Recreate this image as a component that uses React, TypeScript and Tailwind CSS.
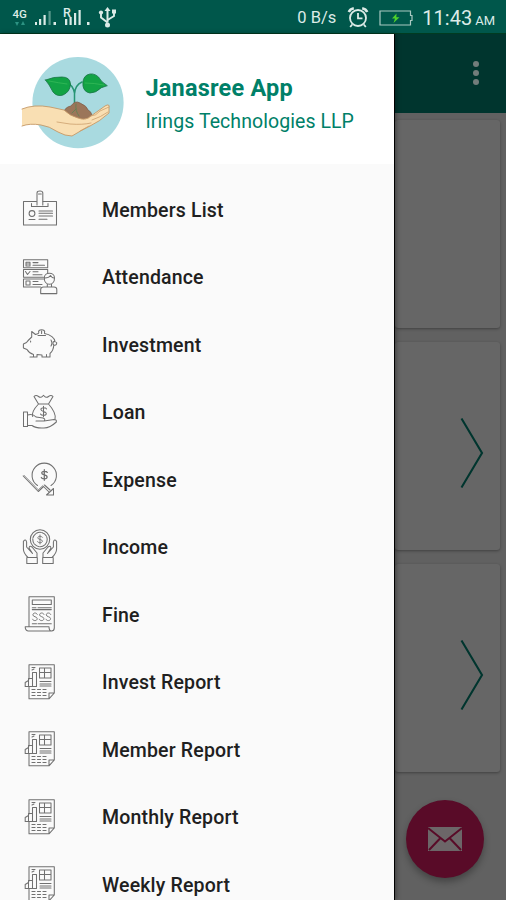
import type { ReactNode } from "react";

function Icon({ children }: { children: ReactNode }) {
  return (
    <svg viewBox="0 0 36 36" className="h-9 w-9 shrink-0 overflow-visible" fill="none" stroke="#707070" strokeWidth="1.05" strokeLinejoin="round" strokeLinecap="round">
      {children}
    </svg>
  );
}

const dollar = "M3 -2.6C2.4 -4 -2.6 -4.4 -2.6 -1.9C-2.6 0.4 2.8 -0.6 2.8 2C2.8 4.5 -2.4 4.2 -3 2.5M0 -5.3V5.3";
const ess = "M2.6 -2.8C2 -5 -2.4 -5 -2.4 -2.1C-2.4 0.2 2.5 -0.4 2.5 2.1C2.5 5 -2.2 5 -2.8 2.8";

const members = (
  <Icon>
    <path d="M14.5 10.5H1.5V34H34.5V10.5H21" />
    <path d="M15 14V2Q15 0 18 0Q20.8 0 20.8 2V14M16.5 3H19.3M9.5 12.5V15.5H26V12.5" />
    <circle cx="10" cy="22.5" r="2.9" />
    <path d="M7 28.5H13M17 20H30.5M17 22.3H30.5M17 25H30.5M17 28.3H25" />
  </Icon>
);

const attendance = (
  <Icon>
    <path d="M1.5 0.7H25.7V8.7H1.5ZM25.7 10.5H1.5V18.2H21.5M25.7 10.5V14M21.5 20H1.5V28H18.5" />
    <path d="M4 3.2H8V7H4ZM4 5H8M11 3.6H16M11 6.3H22.5M3.5 12.5L5.5 15.5L8 12.5M11 12.8H16M11 15.7H20M4 22H8V26H4ZM11 22.5H16M11 25.4H20" />
    <path d="M22.3 19C22.3 12.7 32.5 12.7 32.5 19C32.5 22.5 30.5 25.3 27.4 25.3C24.3 25.3 22.3 22.5 22.3 19ZM22.8 19Q27 19 28.5 16.5Q30 19 32 19M18.7 34.6V30.5Q18.7 28 21.5 28H32Q34.8 28 34.8 30.5V34.6ZM25.3 25.2V28M29.5 25.2V28" />
  </Icon>
);

const piggy = (
  <Icon>
    <path d="M16.4 7.5L13.5 8.5L9.7 5.5V11Q6 14.5 4.5 16.5L1.4 18V22L5 23.5Q7.5 27.5 11.5 28.5V31H8M11.5 31H15V28.5L20 29V31H24.5V28.5M24.5 31H28V27.5Q31.5 24.5 31.8 19C34 20 35 18 34.6 16.4M31.8 19C30 17.5 31.5 14 33.2 16C33.2 12 28 8.4 22.5 7.5" />
    <path d="M16.8 6.8C15 2.7 24.2 2.7 22.5 6.8M16 9.5H23.5M19.6 5V7.5M8.6 15V16M29 14Q31 17 29 20" />
  </Icon>
);

const loan = (
  <Icon>
    <path d="M16.5 10L12 2.5Q14 .5 16.5 2.5Q19 4.5 21.5 1.3Q24 4.5 26.5 2.5Q29 .5 31 2.5L26.5 10ZM16.5 10Q9 18 10.7 22.5M26.5 10Q34.5 19 33 25" />
    <path transform="translate(21.5 17.5)" d={dollar} />
    <path d="M1.5 18H5.5V32.5H1.5ZM5.5 21Q11 19.5 14 23L21 24Q24 25 22 27H14M22 27L32 25.5Q35 25.5 34.3 28Q28 34 22 34Q14 34.5 10 31.5H5.5" />
  </Icon>
);

const expense = (
  <Icon>
    <path d="M15.5 24.5A12.2 12.2 0 1 1 29 24.5M1.2 15L16.3 30.5L21.5 25.5L27 31M24.5 34H31.5V27.5ZM22.5 24L28 29" />
    <path strokeWidth="0.8" d="M2 14.3L16.3 28.8L21 24.5" />
    <path strokeWidth="1.25" transform="translate(22.3 14)" d={dollar} />
  </Icon>
);

const income = (
  <Icon>
    <circle cx="18" cy="10.5" r="9.7" />
    <circle cx="18" cy="10.5" r="7.2" strokeDasharray="5 1" />
    <path transform="translate(18 10.5) scale(.85)" d={dollar} />
    <path d="M4.8 28.5H15.3V34.5H4.8ZM6 28.5Q1.4 24 1.4 20V12.3Q3.8 9.5 4.6 13V18L10.5 24.5L7 19Q7.5 16 10 18L15 24V28.5" />
    <path d="M31.2 28.5H20.7V34.5H31.2ZM30 28.5Q34.6 24 34.6 20V12.3Q32.2 9.5 31.4 13V18L25.5 24.5L29 19Q28.5 16 26 18L21 24V28.5" />
  </Icon>
);

const fine = (
  <Icon>
    <path d="M7 30.8V.8H32.3V32Q32.3 35 29.5 35H6Q3.2 34.5 3.2 30.8H27Q27 34.8 29.5 35M10.3 4H29.3V8.5H10.3ZM10.3 11.7H14M16 11.7H29.3M10.3 13.6H29.3M10.3 27.8H14.5M16 27.8H29.3" />
    <path transform="translate(13 20.8) scale(.88)" d={ess} />
    <path transform="translate(19.7 20.8) scale(.88)" d={ess} />
    <path transform="translate(26.4 20.8) scale(.88)" d={ess} />
  </Icon>
);

const report = (
  <Icon>
    <path d="M7 15V.8H32.3V29L27 34.8H7V23M27 34.8V29H32.3" />
    <path d="M3.2 22.5V18.5L6.5 16.5V14.5H10.5V8.5H14.5V22.5ZM6.5 16.5V22.5M10.5 14.5V22.5M17.5 4H29V14H17.5ZM22.5 4V14M17.5 8.5H29M18 17.5H29M18 20H29M18 22H29M10 3.5H13M10 6L12 5" />
    <path strokeWidth="1.2" strokeDasharray="3 2.5" d="M10 25.5H25M10 28.5H25M10 31.5H24" />
  </Icon>
);

const items: { label: string; icon: ReactNode }[] = [
  { label: "Members List", icon: members },
  { label: "Attendance", icon: attendance },
  { label: "Investment", icon: piggy },
  { label: "Loan", icon: loan },
  { label: "Expense", icon: expense },
  { label: "Income", icon: income },
  { label: "Fine", icon: fine },
  { label: "Invest Report", icon: report },
  { label: "Member Report", icon: report },
  { label: "Monthly Report", icon: report },
  { label: "Weekly Report", icon: report },
];

function StatusBar() {
  return (
    <div className="flex h-[34px] shrink-0 items-center border-b border-[#003b20] bg-[#00574b] text-[#dcebe7]">
      <svg viewBox="0 0 120 34" className="h-[34px] w-[120px]" fill="#dcebe7">
        <text x="12.5" y="18" fontSize="11.5" fontWeight="500">4G</text>
        <path fill="#2c9383" d="M15 22h4l-2 4zM21 25h4l-2-4z" />
        <path d="M35 22h2v3h-2zM39 19h2.2v6H39zM43.5 15h2.2v10h-2.2zM53.5 22h2.5v3h-2.5zM65 19h2.3v6H65zM69.5 17h2.2v8h-2.2zM74 13h2.2v12H74zM78.5 10h2.2v15h-2.2zM87 22h2.5v3H87z" />
        <path fill="#58988c" d="M48.5 11h2.2v14h-2.2z" />
        <text x="63" y="17" fontSize="12.5" fontWeight="500">R</text>
        <path d="M107.5 7l3 4h-2v11.5h-2V11h-2z" />
        <path fill="none" stroke="#dcebe7" strokeWidth="1.9" d="M107.5 22.5L101 17.5V13M107.5 20L114 16V11.5" />
        <circle cx="101" cy="12.5" r="2.1" />
        <path d="M112 9.5h4v4h-4z" />
        <circle cx="107.5" cy="25" r="2.5" />
      </svg>
      <span className="ml-auto whitespace-nowrap pt-[4px] text-[16.5px]">0 B/s</span>
      <svg viewBox="0 0 22 22" className="ml-[11px] h-[22px] w-[22px]" fill="none" stroke="#dcebe7" strokeWidth="1.8">
        <circle cx="11" cy="12" r="8" />
        <path d="M11 7v5.3h4.5M5.2 18.5l-2 2.5M16.8 18.5l2 2.5" />
        <path strokeWidth="2.6" d="M1.8 6Q3 3 6.8 2.2M20.2 6Q19 3 15.2 2.2" />
      </svg>
      <svg viewBox="0 0 34 16" className="ml-2.5 mt-0.5 h-4 w-[34px]">
        <path fill="none" stroke="#a9c9c2" strokeWidth="1.2" d="M1 1h30.5v4.5H33v5h-1.5V15H1z" />
        <path fill="#4fd22b" d="M17.5 3.5L13 8.5h3L14.5 13l6-5.8h-3.2z" />
      </svg>
      <div className="ml-[9px] mr-[11px] flex items-baseline gap-[3px] whitespace-nowrap pt-[3px]">
        <span className="text-[20px] leading-6">11:43</span>
        <span className="text-[13px] leading-4">AM</span>
      </div>
    </div>
  );
}

function Logo() {
  return (
    <svg viewBox="0 0 140 130" className="h-[130px] w-[140px] shrink-0" strokeLinejoin="round" strokeLinecap="round">
      <circle cx="78" cy="68.7" r="45.6" fill="#a9dae0" />
      <path fill="none" stroke="#279574" strokeWidth="1.5" d="M74.5 69V59Q73 51 66 48M74.5 60Q75 51 82 48" />
      <path fill="#12a345" stroke="#177344" strokeWidth=".8" d="M45.5 46Q54 42.5 62 43Q70 43 70.5 50Q70 58 63 61Q57 63 53 58Q49 50 45.5 46Z" />
      <path fill="#12a345" stroke="#177344" strokeWidth=".8" d="M107 51.5Q101 48 98.5 43Q93 38 87 41Q82 44 83 52Q84 58 90 59Q96 59 101 54Z" />
      <path fill="none" stroke="#3bbd5c" strokeWidth=".7" d="M49 47Q59 49 67 50M104 51Q94 49 85 49" />
      <path fill="#9b765a" stroke="#80604b" strokeWidth=".8" d="M64 78Q65 73 71 72Q75 66 80 69Q87 72 88 76Q94 79 90 86L78 86Q67 84 64 78Z" />
      <path fill="none" stroke="#698054" strokeWidth="1" d="M76 70Q75 77 79 82M76 75L72 79" />
      <path fill="#f9dfb3" d="M22 75Q34 70 50 73L64 76Q70 82 78 84Q86 87 91 82L105 72Q110 69 109 74L109 79Q99 88 90 92Q80 97 72 102Q65 102 58 98Q49 92 41 91Q30 89 22 92Z" />
      <path fill="none" stroke="#c59867" strokeWidth=".9" d="M22 75Q34 70 50 73L64 76Q70 82 78 84Q86 87 91 82L105 72Q110 69 109 74L109 79Q99 88 90 92Q80 97 72 102Q65 102 58 98Q49 92 41 91Q30 89 22 92" />
      <path fill="none" stroke="#cc9f6d" strokeWidth=".8" d="M57 88L70 90Q83 91 91 89M91 82Q96 82 100 77L109 73M92 86Q101 83 108 78M80 97L89 92" />
    </svg>
  );
}

function Chevron() {
  return (
    <svg viewBox="0 0 24 72" className="mt-[15px] h-[72px] w-6" fill="none" stroke="#00352e" strokeWidth="2.1">
      <path d="M1.5 1.5L22 36L1.5 70.5" />
    </svg>
  );
}

const cardClass = "mr-1.5 flex h-[208px] shrink-0 items-center justify-end rounded-[3px] bg-[#666666] pr-4 shadow-[0_1px_3px_rgba(0,0,0,0.35)]";

export default function App() {
  return (
    <div className="relative flex h-[900px] w-[506px] flex-col overflow-hidden bg-[#616161] font-[Roboto,sans-serif]">
      <StatusBar />
      <div className="flex min-h-0 flex-1">
        <aside className="z-10 flex w-[395px] shrink-0 flex-col overflow-hidden border-r border-black bg-[#fafafa] shadow-[1px_0_5px_rgba(0,0,0,0.4)]">
          <header className="flex h-[130px] shrink-0 bg-white text-[#008068]">
            <Logo />
            <div className="ml-[5.5px] pt-[39px]">
              <h1 className="whitespace-nowrap text-[23.5px] leading-[30px] font-bold tracking-[0.2px]">Janasree App</h1>
              <p className="mt-[5px] whitespace-nowrap text-[19.5px] leading-7 tracking-[0.07px]">Irings Technologies LLP</p>
            </div>
          </header>
          <nav className="flex flex-col pt-[11.5px]">
            {items.map((item) => (
              <div key={item.label} className="flex h-[67.5px] shrink-0 items-center pl-[22px]">
                {item.icon}
                <span className="ml-11 whitespace-nowrap pt-[3px] text-[19.5px] leading-7 font-medium tracking-[0.17px] text-[#202020]">{item.label}</span>
              </div>
            ))}
          </nav>
        </aside>
        <main className="flex min-w-0 flex-1 flex-col">
          <div className="flex h-[78.5px] shrink-0 items-center justify-end bg-[#00352e] pr-[27px]">
            <div className="flex flex-col gap-[3px]">
              <i className="h-[6px] w-[6px] rounded-full bg-[#727d7b]" />
              <i className="h-[6px] w-[6px] rounded-full bg-[#727d7b]" />
              <i className="h-[6px] w-[6px] rounded-full bg-[#727d7b]" />
            </div>
          </div>
          <div className="flex flex-col gap-3.5 pt-[7px]">
            <div className={cardClass} />
            <div className={cardClass}><Chevron /></div>
            <div className={cardClass}><Chevron /></div>
          </div>
        </main>
      </div>
      <button className="absolute right-[22px] bottom-[22px] flex h-[78px] w-[78px] items-center justify-center rounded-full bg-[#590b28] shadow-[0_4px_7px_rgba(0,0,0,0.3)]">
        <svg viewBox="0 0 36 26" className="h-[26px] w-9">
          <path fill="#6c6668" d="M1 1H35V25H1Z" />
          <path fill="none" stroke="#590b28" strokeWidth="2" d="M1 2L18 15.5L35 2M2 24L13 12.5M34 24L23 12.5" />
        </svg>
      </button>
    </div>
  );
}
